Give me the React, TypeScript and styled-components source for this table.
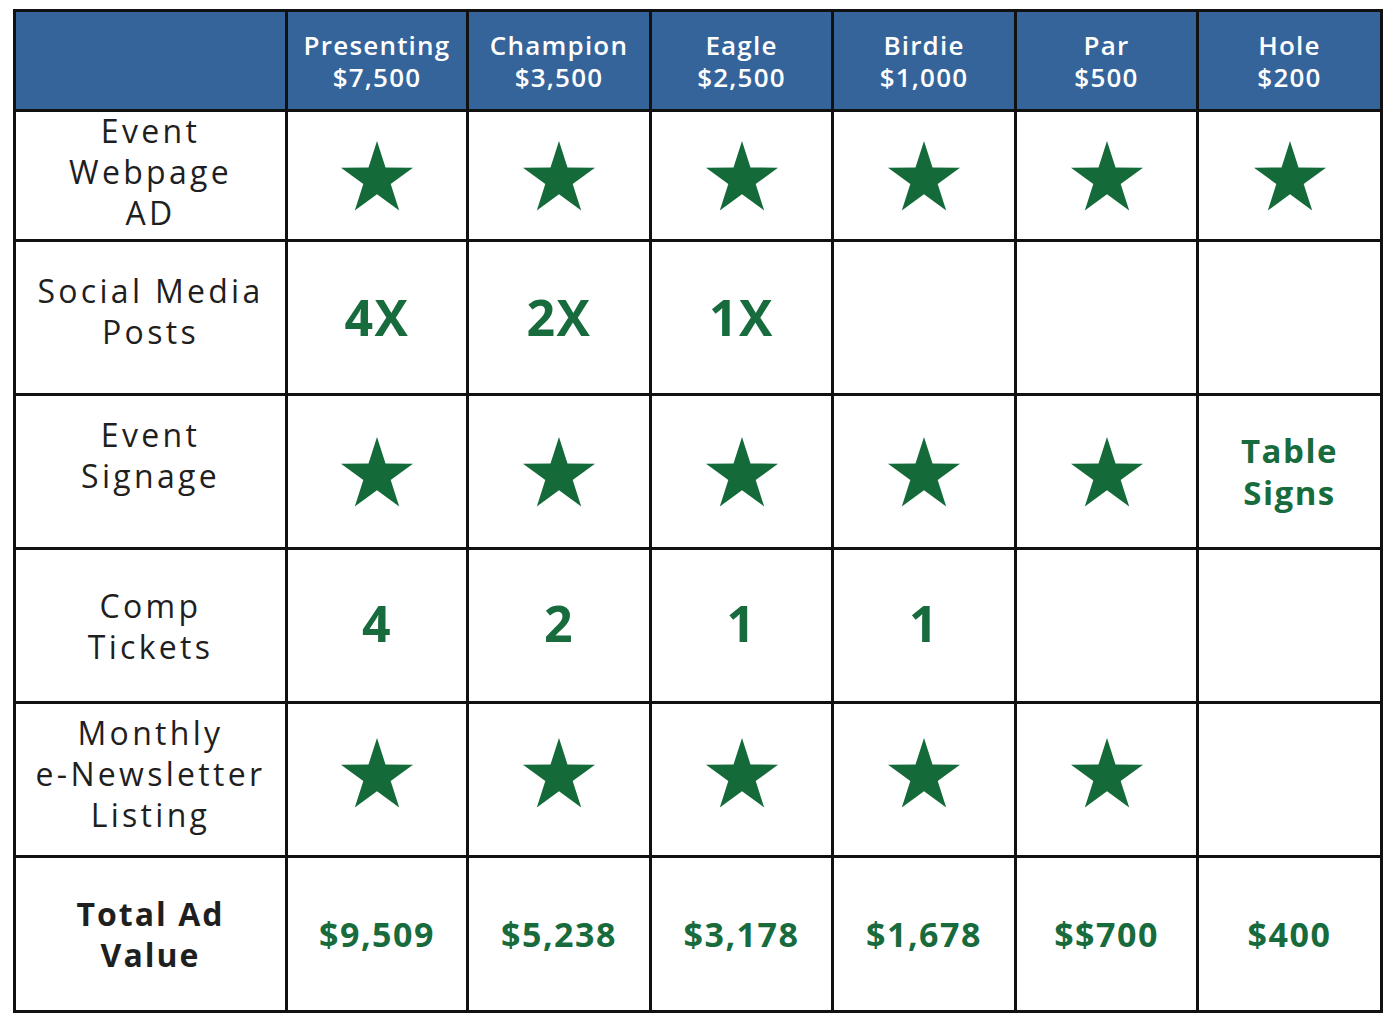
import styled, { createGlobalStyle } from 'styled-components'

const GlobalStyle = createGlobalStyle`
  html, body {
    margin: 0;
    padding: 0;
    background: #ffffff;
  }
  body {
    font-family: 'Open Sans', 'Liberation Sans', sans-serif;
  }
`

const Page = styled.div`
  padding: 9px 0 0 13px;
`

const Grid = styled.div`
  display: grid;
  grid-template-columns: 269px 178px 180px 179px 180px 179px 181px;
  grid-template-rows: 97px 127px 151px 151px 151px 151px 152px;
  gap: 3px;
  padding: 3px;
  background: #111111;
  width: max-content;
`

const HeadCell = styled.div`
  background: #35649b;
  color: #ffffff;
  display: flex;
  flex-direction: column;
  align-items: center;
  justify-content: center;
  font-size: 26px;
  font-weight: 600;
  line-height: 32px;
  letter-spacing: 1.2px;
  text-align: center;
`

const HeadLine = styled.div`
  height: 32px;
`

const LabelCell = styled.div<{ $bold?: boolean; $lift?: number }>`
  background: #ffffff;
  color: #1f1f1f;
  display: flex;
  align-items: center;
  justify-content: center;
  text-align: center;
  font-size: 32px;
  line-height: 41px;
  font-weight: ${(p) => (p.$bold ? 700 : 400)};
  letter-spacing: ${(p) => (p.$bold ? 2 : 3.3)}px;
  padding-bottom: ${(p) => p.$lift ?? 0}px;
`

const ValueCell = styled.div<{ $size?: number; $lift?: number }>`
  background: #ffffff;
  color: #176b3c;
  display: flex;
  align-items: center;
  justify-content: center;
  text-align: center;
  font-weight: 700;
  font-size: ${(p) => p.$size ?? 34}px;
  line-height: 1.25;
  letter-spacing: 1.5px;
  padding-bottom: ${(p) => p.$lift ?? 0}px;
`

const StarIcon = () => (
  <svg width="72" height="70" viewBox="0 0 72 70">
    <polygon
      points="36,0 44.5,26.5 72,26.7 49.7,43 58.2,69.5 36,53.3 13.8,69.5 22.3,43 0,26.7 27.5,26.5"
      fill="#146b39"
    />
  </svg>
)

type Cell = 'star' | string | null

const headers = [
  ['Presenting', '$7,500'],
  ['Champion', '$3,500'],
  ['Eagle', '$2,500'],
  ['Birdie', '$1,000'],
  ['Par', '$500'],
  ['Hole', '$200'],
]

const rows: {
  label: string[]
  bold?: boolean
  size?: number
  lift?: number
  cellLift?: number
  cells: Cell[]
}[] = [
  {
    label: ['Event', 'Webpage', 'AD'],
    lift: 8,
    cells: ['star', 'star', 'star', 'star', 'star', 'star'],
  },
  {
    label: ['Social Media', 'Posts'],
    size: 50,
    lift: 14,
    cells: ['4X', '2X', '1X', null, null, null],
  },
  {
    label: ['Event', 'Signage'],
    size: 33,
    lift: 34,
    cells: ['star', 'star', 'star', 'star', 'star', 'Table\nSigns'],
  },
  {
    label: ['Comp', 'Tickets'],
    size: 50,
    cellLift: 4,
    cells: ['4', '2', '1', '1', null, null],
  },
  {
    label: ['Monthly', 'e-Newsletter', 'Listing'],
    lift: 12,
    cellLift: 14,
    cells: ['star', 'star', 'star', 'star', 'star', null],
  },
  {
    label: ['Total Ad', 'Value'],
    bold: true,
    size: 34,
    cells: ['$9,509', '$5,238', '$3,178', '$1,678', '$$700', '$400'],
  },
]

export default function App() {
  return (
    <Page>
      <GlobalStyle />
      <Grid>
        <HeadCell />
        {headers.map(([name, price]) => (
          <HeadCell key={name}>
            <HeadLine>{name}</HeadLine>
            <HeadLine>{price}</HeadLine>
          </HeadCell>
        ))}
        {rows.map((row, ri) => [
          <LabelCell key={`l${ri}`} $bold={row.bold} $lift={row.lift}>
            <div>
              {row.label.map((l) => (
                <div key={l}>{l}</div>
              ))}
            </div>
          </LabelCell>,
          ...row.cells.map((c, ci) => (
            <ValueCell key={`c${ri}-${ci}`} $size={row.size} $lift={row.cellLift}>
              {c === 'star' ? (
                <StarIcon />
              ) : c ? (
                <div>
                  {c.split('\n').map((t) => (
                    <div key={t}>{t}</div>
                  ))}
                </div>
              ) : null}
            </ValueCell>
          )),
        ])}
      </Grid>
    </Page>
  )
}
